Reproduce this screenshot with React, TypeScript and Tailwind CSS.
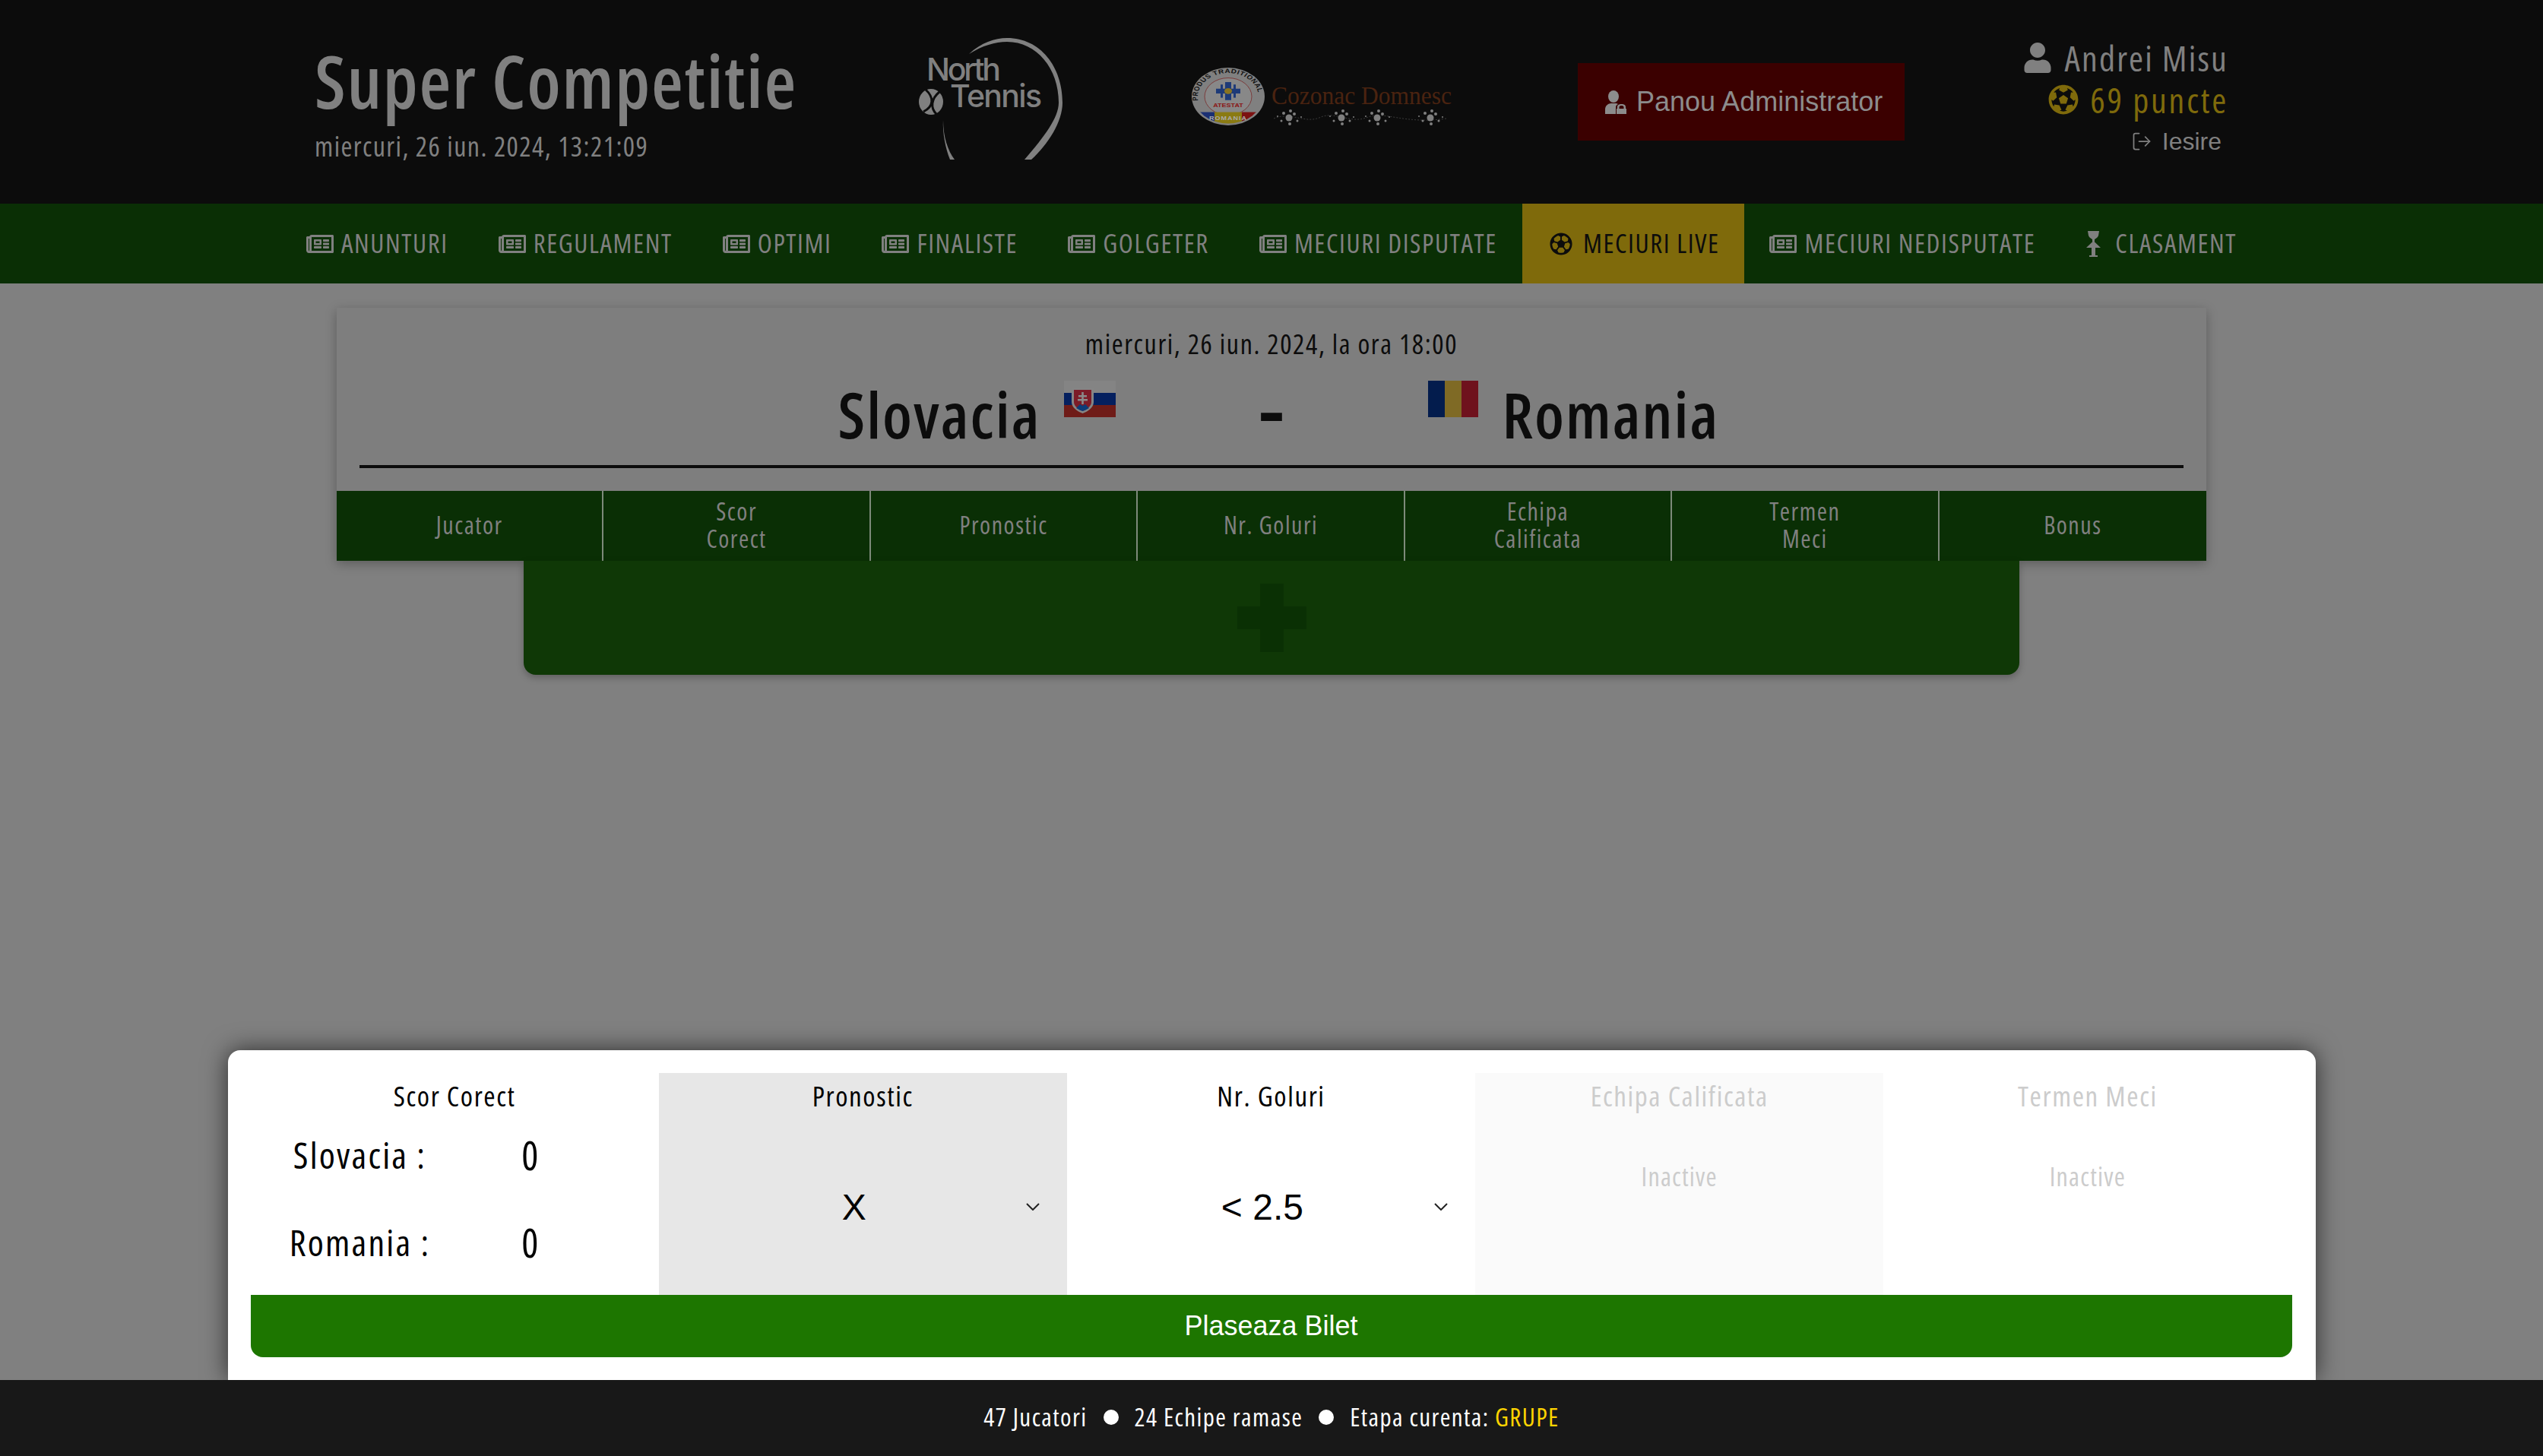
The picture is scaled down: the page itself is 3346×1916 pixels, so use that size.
import { FaFutbol, FaRegFutbol, FaRegNewspaper, FaUser } from "react-icons/fa"
import { LogOut } from "lucide-react"

const navItems = [
  { label: "ANUNTURI" },
  { label: "REGULAMENT" },
  { label: "OPTIMI" },
  { label: "FINALISTE" },
  { label: "GOLGETER" },
  { label: "MECIURI DISPUTATE" },
  { label: "MECIURI LIVE", active: true },
  { label: "MECIURI NEDISPUTATE" },
]

const tableColumns = [["Jucator"], ["Scor", "Corect"], ["Pronostic"], ["Nr. Goluri"], ["Echipa", "Calificata"], ["Termen", "Meci"], ["Bonus"]]

function NorthTennisLogo() {
  return (
    <svg width="189" height="160" viewBox="0 0 189 160" className="shrink-0 ml-[163px] mb-[8px]">
      <path d="M66 21C82 6 100 0 116 0C160 0 189 38 189 85C189 110 170 140 148 160L139 160C165 130 184 105 184 85C184 40 155 5 116 5C100 5 84 10 66 21Z" fill="#808080" />
      <path d="M32 108C32 130 38 148 47 160L41 160C35 145 31 125 32 108Z" fill="#808080" />
      <text x="10" y="56" fontSize="41" fill="#808080" fontFamily="Inter, sans-serif" fontWeight="500" textLength="98">North</text>
      <text x="41" y="91" fontSize="41" fill="#808080" fontFamily="Inter, sans-serif" fontWeight="500" textLength="121">Tennis</text>
      <ellipse cx="16" cy="84" rx="16" ry="17" fill="#808080" />
      <path d="M9 68C20 78 20 90 6 97M27 71C16 80 15 92 23 100" fill="none" stroke="#0c0c0c" strokeWidth="3" />
    </svg>
  )
}

function CozonacLogo() {
  return (
    <svg width="342" height="78" viewBox="0 0 342 78" className="shrink-0 overflow-visible ml-[170px] mb-[14px]">
      <defs>
        <clipPath id="badge-clip">
          <circle r="45" />
        </clipPath>
        <path id="badge-arc" d="M-37 16A40 40 0 1 1 37 16" />
      </defs>
      <g transform="translate(48 39) scale(1 0.79)">
        <circle r="48" fill="#808080" />
        <circle r="31" fill="#888888" stroke="#7a3434" strokeWidth="1" />
        <g clipPath="url(#badge-clip)">
          <rect x="-48" y="26" width="30" height="24" fill="#1b2f73" />
          <rect x="-18" y="26" width="36" height="24" fill="#8a7a12" />
          <rect x="18" y="26" width="30" height="24" fill="#7c1111" />
        </g>
        <text fontSize="10" fontWeight="700" fill="#111111" fontFamily="Liberation Sans, sans-serif" letterSpacing="0.6">
          <textPath href="#badge-arc" startOffset="6%">PRODUS TRADITIONAL</textPath>
        </text>
        <rect x="-4" y="-24" width="8" height="30" fill="#1d3a78" />
        <rect x="-16" y="-13" width="32" height="8" fill="#1d3a78" />
        <rect x="-10" y="-20" width="3" height="22" fill="#1d3a78" />
        <rect x="7" y="-20" width="3" height="22" fill="#1d3a78" />
        <circle cy="-9" r="5" fill="#8a7420" />
        <text y="18" textAnchor="middle" fontSize="9" fontWeight="700" fill="#8a1717" fontFamily="Liberation Sans, sans-serif">ATESTAT</text>
        <text y="39" textAnchor="middle" fontSize="9" fontWeight="700" fill="#aaaaaa" fontFamily="Liberation Sans, sans-serif" letterSpacing="1">ROMANIA</text>
      </g>
      <text x="105" y="49" fontSize="34" fill="#4a2310" fontFamily="Liberation Serif, serif" textLength="237" lengthAdjust="spacingAndGlyphs">Cozonac Domnesc</text>
      <path d="M108 68C130 58 150 76 170 66C190 58 210 76 232 66C255 58 280 76 335 68" fill="none" stroke="#3a3a3a" strokeWidth="1" strokeDasharray="2 2" />
      {[128, 197, 244, 314].map((x) => (
        <g key={x} fill="#7f7f7f">
          <circle cx={x} cy="67" r="4.5" />
          <circle cx={x - 7} cy="61" r="2" />
          <circle cx={x + 7} cy="62" r="2" />
          <circle cx={x - 10} cy="71" r="1.5" />
          <circle cx={x + 11} cy="71" r="1.5" />
          <circle cx={x + 2} cy="58" r="2" />
          <circle cx={x + 1} cy="75" r="2" />
          <circle cx={x - 15} cy="65" r="1" />
          <circle cx={x + 16} cy="66" r="1" />
        </g>
      ))}
    </svg>
  )
}

function SlovakiaFlag() {
  return (
    <svg width="68" height="48" viewBox="0 0 68 48" className="shrink-0">
      <rect width="68" height="16" fill="#848484" />
      <rect y="16" width="68" height="16" fill="#05205f" />
      <rect y="32" width="68" height="16" fill="#6f1c18" />
      <path d="M10 9H39V28C39 36 30 41 24.5 43C19 41 10 36 10 28Z" fill="#858585" />
      <path d="M13 12H36V28C36 34 29 38 24.5 40C20 38 13 34 13 28Z" fill="#7c1c28" />
      <path d="M16 36L21 31L24.5 33L28 31L33 36C30 38 27 39 24.5 40C22 39 19 38 16 36Z" fill="#0c3c78" />
      <path d="M23.2 15H25.8V19H30V21.4H25.8V24H31V26.4H25.8V31H23.2V26.4H18V24H23.2V21.4H19V19H23.2Z" fill="#8a8a8a" />
    </svg>
  )
}

function RomaniaFlag() {
  return (
    <div className="flex w-[67px] h-[48px] shrink-0">
      <div className="flex-1 bg-[#031c4d]" />
      <div className="flex-1 bg-[#7f6a25]" />
      <div className="flex-1 bg-[#6f121d]" />
    </div>
  )
}

function ClasamentIcon() {
  return (
    <svg width="21" height="34" viewBox="0 0 21 34" fill="#808080">
      <path d="M3 0H18L17 6C16 9 13 10 12 11V14H9V11C8 10 5 9 4 6Z" />
      <path d="M10.5 13L20 22H13V32H16V34H5V32H8V22H1Z" />
    </svg>
  )
}

function AdminIcon() {
  return (
    <svg width="28" height="31" viewBox="0 0 28 31" fill="currentColor" className="shrink-0">
      <ellipse cx="11" cy="8" rx="7" ry="8" />
      <path d="M0 31V25C0 20 4 17 8 17H14C15 17 16 17.5 17 18C15 19 14 20 14 22V31Z" />
      <path d="M16 24V22C16 19 18 18 21.5 18C25 18 27 19 27 22V24H28V31H15V24ZM18.5 24H24.5V22C24.5 20.5 23 20 21.5 20C20 20 18.5 20.5 18.5 22Z" />
    </svg>
  )
}

function Chevron() {
  return (
    <svg width="18" height="10" viewBox="0 0 18 10" className="absolute right-[36px] top-1/2 -translate-y-1/2">
      <path d="M1 1L9 9L17 1" fill="none" stroke="#222222" strokeWidth="2" />
    </svg>
  )
}

function NavItem({ label, active }: { label: string; active?: boolean }) {
  if (active) {
    return (
      <div className="flex items-center h-full gap-[14px] pl-[36px] pr-[33px] bg-[#7f6a0b] text-[#0c0c0c]">
        <FaRegFutbol size={30} />
        <span>{label}</span>
      </div>
    )
  }
  return (
    <div className="flex items-center h-full gap-[10px] px-[33px] text-[#808080]">
      <FaRegNewspaper size={36} />
      <span>{label}</span>
    </div>
  )
}

function ScoreRow({ team }: { team: string }) {
  return (
    <div className="flex items-center h-[96px] text-[48px] tracking-[2.2px] text-black">
      <span className="w-[288px] text-center">{team} :</span>
      <span className="w-[162px] text-center text-[52px]">0</span>
    </div>
  )
}

function ColumnTitle({ title }: { title: string }) {
  return <div className="h-[60px] flex items-center justify-center text-[37px] tracking-[1.6px] font-medium">{title}</div>
}

function SelectColumn({ title, value, shaded }: { title: string; value: string; shaded?: boolean }) {
  return (
    <div className={`flex flex-col text-black ${shaded ? "bg-[#e7e7e7]" : ""}`}>
      <ColumnTitle title={title} />
      <div className="relative flex-1 flex items-center pt-[2px]">
        <span className="w-[514px] text-center font-['Liberation_Sans',sans-serif] font-stretch-normal text-[48px]">{value}</span>
        <Chevron />
      </div>
    </div>
  )
}

function InactiveColumn({ title, shaded }: { title: string; shaded?: boolean }) {
  return (
    <div className={`flex flex-col text-[#cccccc] ${shaded ? "bg-[#fafafa]" : ""}`}>
      <ColumnTitle title={title} />
      <div className="mt-[56px] text-center text-[34px] leading-[40px] tracking-[1.2px]">Inactive</div>
    </div>
  )
}

export default function App() {
  return (
    <div className="flex flex-col h-[1916px] bg-[#808080] font-['Open_Sans',sans-serif] font-stretch-condensed">
      {/* Header */}
      <header className="h-[268px] bg-[#0c0c0c] flex items-center pl-[414px] shrink-0">
        <div className="w-[632px] shrink-0 text-[#808080]">
          <h1 className="text-[96px] leading-[118px] font-semibold tracking-[1.7px] whitespace-nowrap">Super Competitie</h1>
          <div className="text-[36px] leading-[56px] tracking-[1.4px] whitespace-nowrap">miercuri, 26 iun. 2024, 13:21:09</div>
        </div>
        <NorthTennisLogo />
        <CozonacLogo />
        <button className="flex items-center gap-[13px] w-[430px] h-[102px] ml-[166px] pl-[36px] bg-[#3b0000] text-[#8c8c8c] font-['Liberation_Sans',sans-serif] font-stretch-normal text-[36px]">
          <AdminIcon />
          <span className="whitespace-nowrap">Panou Administrator</span>
        </button>
        <div className="flex flex-col items-end shrink-0 w-[265px] ml-[161px] pb-[6px] whitespace-nowrap">
          <div className="flex items-center gap-[15px] h-[55px] text-[46px] tracking-[2.2px] text-[#808080]">
            <FaUser size={40} />
            <span>Andrei Misu</span>
          </div>
          <div className="flex items-center gap-[15px] h-[55px] text-[46px] tracking-[2.8px] font-medium text-[#7f6a0b]">
            <FaFutbol size={40} />
            <span>69 puncte</span>
          </div>
          <div className="flex items-center gap-[13px] h-[55px] mr-[9px] font-['Liberation_Sans',sans-serif] font-stretch-normal text-[32px] text-[#808080]">
            <LogOut size={28} strokeWidth={1.5} />
            <span>Iesire</span>
          </div>
        </div>
      </header>

      {/* Navigation */}
      <nav className="h-[105px] bg-[#0a2f05] flex items-center justify-center text-[35px] font-medium tracking-[1.6px] whitespace-nowrap shrink-0">
        {navItems.map((item) => (
          <NavItem key={item.label} label={item.label} active={item.active} />
        ))}
        <div className="flex items-center h-full gap-[18px] px-[33px] text-[#808080]">
          <ClasamentIcon />
          <span>CLASAMENT</span>
        </div>
      </nav>

      {/* Match card */}
      <main className="flex-1 flex flex-col">
        <section className="w-[2460px] mx-auto mt-[32px] bg-[#7e7e7e] shadow-[0_4px_14px_rgba(0,0,0,0.28)]">
          <div className="px-[30px] pt-[26px] h-[241px] text-[#0c0c0c]">
            <div className="text-center text-[36px] leading-[44px] tracking-[1.6px]">miercuri, 26 iun. 2024, la ora 18:00</div>
            <div className="flex h-[141px] border-b-4 border-[#0c0c0c]">
              <div className="flex-1 flex justify-end items-start gap-[30px]">
                <span className="text-[84px] leading-[100px] font-semibold tracking-[2px] mt-[20px]">Slovacia</span>
                <div className="mt-[26px]"><SlovakiaFlag /></div>
              </div>
              <div className="w-[411px] text-center text-[110px] leading-[120px] font-semibold font-stretch-normal">-</div>
              <div className="flex-1 flex items-start gap-[31px]">
                <div className="mt-[26px]"><RomaniaFlag /></div>
                <span className="text-[84px] leading-[100px] font-semibold tracking-[2px] mt-[20px]">Romania</span>
              </div>
            </div>
          </div>
          <div className="grid grid-cols-7 h-[92px] bg-[#0a2f05] text-[#808080] text-[32px] leading-[36px] tracking-[1.5px]">
            {tableColumns.map((lines, i) => (
              <div key={lines[0]} className={`flex flex-col items-center justify-center pb-[2px] ${i < 6 ? "border-r-2 border-[#7d8a7a]" : ""}`}>
                {lines.map((line) => (
                  <span key={line}>{line}</span>
                ))}
              </div>
            ))}
          </div>
        </section>

        <div className="w-[1968px] h-[150px] mx-auto flex items-center justify-center bg-[#0f3806] rounded-b-[16px] shadow-[0_4px_10px_rgba(0,0,0,0.25)]">
          <svg width="91" height="90" viewBox="0 0 91 90" fill="#0a3004">
            <path d="M30 0H61V30H91V60H61V90H30V60H0V30H30Z" />
          </svg>
        </div>

        {/* Ticket panel */}
        <section className="w-[2747px] mx-auto mt-auto pt-[30px] pl-[30px] pr-[31px] pb-[30px] bg-white rounded-t-[16px] shadow-[0_0_32px_rgba(0,0,0,0.65)]">
          <div className="grid grid-cols-5 h-[292px]">
            <div className="flex flex-col text-black">
              <ColumnTitle title="Scor Corect" />
              <div className="flex flex-col gap-[19px]">
                <ScoreRow team="Slovacia" />
                <ScoreRow team="Romania" />
              </div>
            </div>
            <SelectColumn title="Pronostic" value="X" shaded />
            <SelectColumn title="Nr. Goluri" value="< 2.5" />
            <InactiveColumn title="Echipa Calificata" shaded />
            <InactiveColumn title="Termen Meci" />
          </div>
          <button className="w-full h-[82px] bg-[#1d7600] rounded-b-[16px] text-white font-['Liberation_Sans',sans-serif] font-stretch-normal text-[36px]">Plaseaza Bilet</button>
        </section>
      </main>

      {/* Footer */}
      <footer className="h-[100px] pb-[2px] bg-[#181818] flex items-center justify-center gap-[21px] text-white text-[33px] tracking-[1.4px] font-medium shrink-0">
        <span>47 Jucatori</span>
        <div className="w-5 h-5 rounded-full bg-white" />
        <span>24 Echipe ramase</span>
        <div className="w-5 h-5 rounded-full bg-white" />
        <span>Etapa curenta: <span className="text-[#ffd400]">GRUPE</span></span>
      </footer>
    </div>
  )
}
